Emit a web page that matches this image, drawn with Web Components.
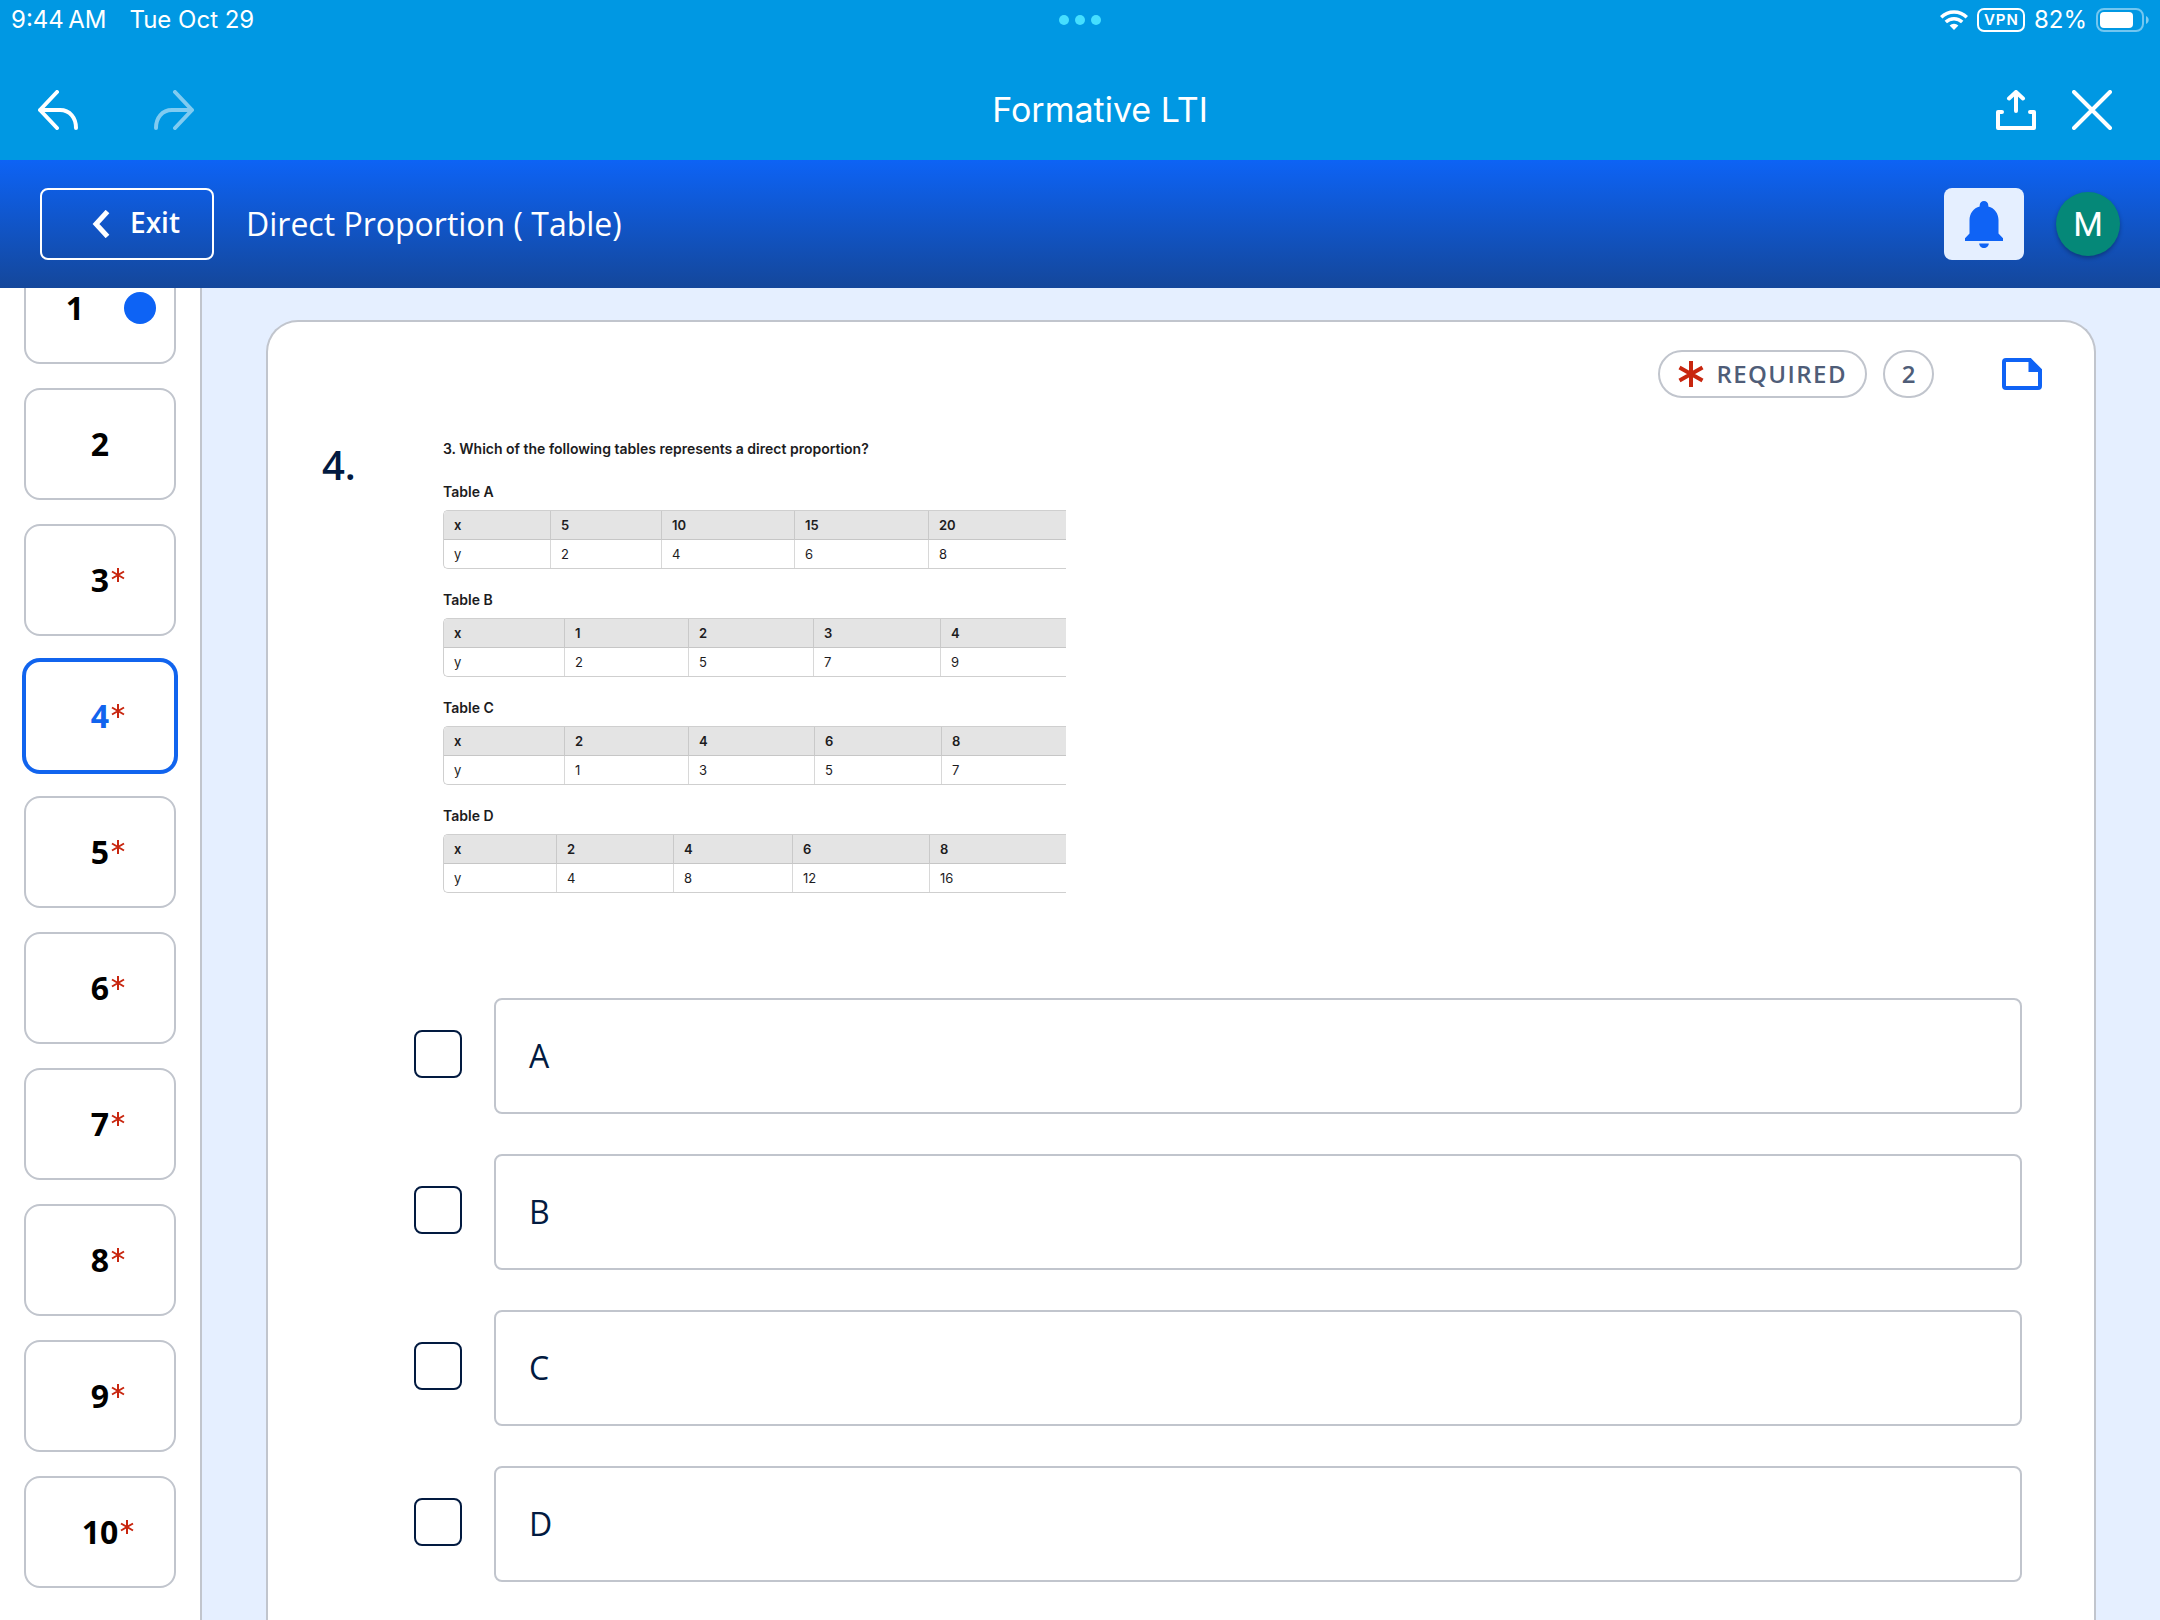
<!DOCTYPE html>
<html lang="en">
<head>
<meta charset="utf-8">
<title>Direct Proportion ( Table)</title>
<style>
  html, body { margin: 0; height: 100%; }
  body { font-family: "Open Sans", "Noto Sans", sans-serif; color: #021a40; background: #fff; overflow: hidden; }
</style>
</head>
<body>
<lti-app></lti-app>
<script>
const define = (name, html, setup) => {
  const tpl = document.createElement('template');
  tpl.innerHTML = html;
  customElements.define(name, class extends HTMLElement {
    connectedCallback() {
      if (this.shadowRoot) return;
      const root = this.attachShadow({ mode: 'open' });
      root.append(tpl.content.cloneNode(true));
      if (setup) setup(this, root);
    }
  });
};

define('device-status', `
<style>
  :host { display: grid; grid-template-columns: 1fr auto 1fr; align-items: center; height: 40px; padding: 0 11px; color: #fff; font: 24px/40px Inter, sans-serif; }
  .left { display: flex; gap: 23px; }
  .dots { display: flex; gap: 6px; }
  .dots i { width: 10px; height: 10px; border-radius: 50%; background: #45dfff; }
  .right { display: flex; justify-content: flex-end; align-items: center; gap: 9px; }
  .vpn { box-sizing: border-box; height: 24px; padding: 0 4px 0 5px; border: 2px solid #fff; border-radius: 7px; font: 600 15px/20px Inter, sans-serif; letter-spacing: 1px; }
  svg { display: block; }
</style>
<div class="left"><span>9:44&#8201;AM</span><span>Tue Oct 29</span></div>
<div class="dots"><i></i><i></i><i></i></div>
<div class="right">
  <svg width="28" height="20" viewBox="0 0 28 20" fill="none" stroke="#fff" stroke-width="3.4">
    <path d="M1.2 7.2a18.3 18.3 0 0 1 25.6 0"/><path d="M5.8 12a11.8 11.8 0 0 1 16.4 0"/>
    <path d="M14 20l-4.4-4.4a6.2 6.2 0 0 1 8.8 0z" fill="#fff" stroke="none"/>
  </svg>
  <span class="vpn">VPN</span>
  <span>82%</span>
  <svg width="53" height="24" viewBox="0 0 53 24">
    <rect x="1" y="1" width="46" height="22" rx="7" fill="none" stroke="#fff" stroke-opacity=".45" stroke-width="2"/>
    <rect x="4" y="4" width="33" height="16" rx="4" fill="#fff"/>
    <path d="M50 8c3.600 1.400 3.600 6.600 0 8z" fill="#fff" fill-opacity=".5"/>
  </svg>
</div>`);

define('icon-button', `
<style>
  :host { display: block; }
  button { display: block; padding: 0; border: 0; background: none; color: inherit; font: inherit; }
</style>
<button type="button"><slot></slot></button>`, (el, root) => {
  root.querySelector('button').setAttribute('aria-label', el.getAttribute('label'));
});

define('viewer-bar', `
<style>
  :host { display: flex; align-items: center; height: 120px; box-sizing: border-box; padding: 20px 48px 0 38px; color: #fff; }
  h1 { flex: 1; margin: 0; text-align: center; font: 400 34px/40px Inter, sans-serif; }
  .group { display: flex; }
  .hist { gap: 76px; padding-right: 10px; }
  .acts { gap: 36px; }
  .off { opacity: .5; }
  svg { display: block; fill: none; stroke: currentColor; stroke-width: 4; stroke-linecap: round; stroke-linejoin: round; }
</style>
<div class="group hist">
  <icon-button label="Undo"><svg width="40" height="40"><path d="M19 2L2 20l17 18M2 20h20c10 0 16 8 16 18"/></svg></icon-button>
  <icon-button label="Redo" class="off"><svg width="40" height="40"><path d="M21 2l17 18-17 18M38 20H18C8 20 2 28 2 38"/></svg></icon-button>
</div>
<h1>Formative LTI</h1>
<div class="group acts">
  <icon-button label="Share"><svg width="40" height="40"><path d="M20 21V2M13 8.500l7-6.500 7 6.500M6 22H2v16h36V22h-4"/></svg></icon-button>
  <icon-button label="Close"><svg width="40" height="40"><path d="M2 2l36 36M38 2L2 38"/></svg></icon-button>
</div>`);

define('activity-bar', `
<style>
  :host { display: flex; align-items: center; height: 128px; box-sizing: border-box; padding: 0 40px; color: #fff; background: linear-gradient(#0d63f5, #14479b); }
  .exit { display: flex; align-items: center; justify-content: flex-end; gap: 20px; box-sizing: border-box; width: 174px; height: 72px; padding: 0 32px 4px 0; border: 2px solid #fff; border-radius: 8px; background: none; color: inherit; font: 600 28px/40px "Open Sans", sans-serif; }
  h2 { flex: 1; margin: 0 0 0 32px; font: 400 32px/44px "Open Sans", sans-serif; }
  .bell { display: grid; place-items: center; width: 80px; height: 72px; padding: 2px 0 0; border: 0; border-radius: 8px; background: #e5efff; }
  .avatar { width: 64px; height: 64px; margin-left: 32px; padding: 0; border: 0; border-radius: 50%; background: #058878; color: #fff; font: 400 34px/64px Roboto, sans-serif; box-shadow: 0 2px 4px rgba(0,0,0,.3); }
  svg { display: block; }
  .chev { margin-top: 4px; }
</style>
<button type="button" class="exit"><svg class="chev" width="18" height="28" viewBox="0 0 18 28"><path d="M15.500 1.500L4 14l11.500 12.500" fill="none" stroke="#fff" stroke-width="5"/></svg>Exit</button>
<h2>Direct Proportion ( Table)</h2>
<button type="button" class="bell" aria-label="Notifications">
  <svg width="40" height="48" viewBox="0 0 40 48" fill="#0f63f5"><path d="M20 0c-2.400 0-4.300 1.800-4.300 4.200v1.200C9.500 7 5.500 12.400 5.500 19v13.500L1 37.200V40h38v-2.800l-4.500-4.700V19c0-6.600-4-12-10.200-13.600V4.200C24.300 1.800 22.400 0 20 0zM15.200 42.500c0 2.500 2.200 4.500 4.800 4.500s4.800-2 4.800-4.500z"/></svg>
</button>
<button type="button" class="avatar" aria-label="Account M">M</button>`);

define('question-link', `
<style>
  :host { display: block; }
  button { display: grid; grid-template-columns: 1fr auto 1fr; align-items: center; width: 100%; height: 112px; box-sizing: border-box; padding: 0; border: 2px solid #c1c5cd; border-radius: 16px; background: #fff; color: #000; font: 700 32px/32px "Open Sans", sans-serif; }
  .num { grid-column: 2; }
  .star { display: none; width: 14px; height: 14px; margin: 0 0 10px 2px; }
  .dot { display: none; width: 32px; height: 32px; border-radius: 50%; background: #0d63f5; }
  :host([required]) .star { display: block; }
  :host([current]) button { border-color: #1164ee; color: #1164ee; box-shadow: 0 0 0 2px #1164ee; }
  :host([answered]) button { display: flex; justify-content: flex-end; gap: 40px; padding-right: 18px; }
  :host([answered]) .dot { display: block; }
</style>
<button type="button"><span class="num"><slot></slot></span><svg class="star" viewBox="0 0 14 14" stroke="#c8260f" stroke-width="2"><path d="M7 0v14M1 3.500l12 7M13 3.500l-12 7"/></svg><i class="dot"></i></button>`);

define('question-nav', `
<style>
  :host { display: block; box-sizing: border-box; width: 202px; padding: 0 24px; border-right: 2px solid #c1c5cd; background: #fff; overflow: hidden; }
  /* list is scrolled partway past its first entry */
  nav { display: grid; gap: 24px; margin-top: -36px; }
</style>
<nav aria-label="Questions">
  <question-link answered>1</question-link>
  <question-link>2</question-link>
  <question-link required>3</question-link>
  <question-link required current>4</question-link>
  <question-link required>5</question-link>
  <question-link required>6</question-link>
  <question-link required>7</question-link>
  <question-link required>8</question-link>
  <question-link required>9</question-link>
  <question-link required>10</question-link>
</nav>`);

define('data-table', `
<style>
  :host { display: block; color: #1c1c1e; }
  h4 { margin: 0 0 8px; font: 600 14px/20px Inter, sans-serif; }
  .clip { border: 1px solid #cfcfcf; border-right: 0; border-radius: 5px 0 0 5px; overflow: hidden; }
  table { width: 100%; table-layout: fixed; border-collapse: separate; border-spacing: 0; }
  th, td { box-sizing: border-box; height: 28px; padding: 0 0 0 10px; border-left: 1px solid #d8d8d8; text-align: left; font: 400 13px/20px Inter, sans-serif; }
  th { height: 29px; background: #e4e4e4; border-bottom: 1px solid #c6c6c6; border-left-color: #c9c9c9; font-weight: 600; }
  th:first-child, td:first-child { border-left: 0; }
</style>
<h4></h4>
<div class="clip"><table><colgroup></colgroup><thead><tr class="x"></tr></thead><tbody><tr class="y"></tr></tbody></table></div>`, (el, root) => {
  const list = n => el.getAttribute(n).split(',');
  root.querySelector('h4').textContent = el.getAttribute('name');
  for (const w of list('cols')) {
    const c = document.createElement('col');
    if (w) c.style.width = w + 'px';
    root.querySelector('colgroup').append(c);
  }
  for (const [row, tag] of [['x', 'th'], ['y', 'td']])
    for (const v of [row, ...list(row)]) {
      const c = document.createElement(tag);
      c.textContent = v;
      root.querySelector('tr.' + row).append(c);
    }
});

define('answer-option', `
<style>
  :host { display: block; }
  label { display: flex; align-items: flex-start; gap: 32px; font-size: 32px; line-height: 44px; }
  input { appearance: none; flex: none; width: 48px; height: 48px; margin: 32px 0 0; box-sizing: border-box; border: 2px solid #021a40; border-radius: 8px; background: #fff; }
  span { flex: 1; box-sizing: border-box; height: 116px; padding: 34px 33px; border: 2px solid #c1c5cd; border-radius: 8px; }
</style>
<label><input type="checkbox"><span><slot></slot></span></label>`);

define('question-card', `
<style>
  :host { display: block; box-sizing: border-box; margin: 32px 64px 0; border: 2px solid #c1c5cd; border-bottom: 0; border-radius: 32px 32px 0 0; background: #fff; }
  header { display: flex; justify-content: flex-end; align-items: center; padding: 28px 52px 0 0; }
  .pill { display: flex; align-items: center; justify-content: center; box-sizing: border-box; height: 48px; border: 2px solid #c1c5cd; border-radius: 24px; color: #4f5d78; font-size: 24px; line-height: 44px; font-weight: 600; }
  .req { gap: 12px; padding: 0 18px; letter-spacing: .06em; }
  .pts { width: 51px; margin: 0 68px 0 16px; }
  svg { display: block; }
  .body { display: grid; grid-template-columns: 121px 1fr; margin-left: 54px; }
  .no { margin: 0; padding-top: 39px; font-size: 40px; line-height: 56px; font-weight: 600; }
  .sheet { display: grid; gap: 21px; width: 623px; padding-top: 41px; }
  h3 { margin: 0 0 2px; color: #1c1c1e; font: 600 14px/20px Inter, sans-serif; }
  .opts { display: grid; gap: 40px; margin: 105px 72px 0 146px; padding-bottom: 80px; }
</style>
<header>
  <span class="pill req"><svg width="26" height="26" viewBox="0 0 26 26" stroke="#c8260f" stroke-width="4"><path d="M13 0v26M1.500 6.500l23 13M24.500 6.500l-23 13"/></svg>REQUIRED</span>
  <span class="pill pts">2</span>
  <icon-button label="Notes"><svg width="40" height="32" viewBox="0 0 40 32"><path d="M28 2H4a2 2 0 0 0-2 2v24a2 2 0 0 0 2 2h32a2 2 0 0 0 2-2V12z" fill="none" stroke="#0f63f5" stroke-width="4"/><path d="M26.500 1v13H39z" fill="#0f63f5"/></svg></icon-button>
</header>
<div class="body">
  <p class="no">4.</p>
  <div class="sheet">
    <h3>3. Which of the following tables represents a direct proportion?</h3>
    <data-table name="Table A" cols="106,111,133,134," x="5,10,15,20" y="2,4,6,8"></data-table>
    <data-table name="Table B" cols="120,124,125,127," x="1,2,3,4" y="2,5,7,9"></data-table>
    <data-table name="Table C" cols="120,124,126,127," x="2,4,6,8" y="1,3,5,7"></data-table>
    <data-table name="Table D" cols="112,117,119,137," x="2,4,6,8" y="4,8,12,16"></data-table>
  </div>
</div>
<div class="opts">
  <answer-option>A</answer-option>
  <answer-option>B</answer-option>
  <answer-option>C</answer-option>
  <answer-option>D</answer-option>
</div>`);

define('lti-app', `
<style>
  :host { display: flex; flex-direction: column; height: 100vh; }
  .top { background: #0098e3; }
  main { flex: 1; min-height: 0; display: flex; background: #e5efff; overflow: hidden; }
  question-nav { flex: none; }
  question-card { flex: 1; min-height: 1300px; }
</style>
<div class="top"><device-status></device-status><viewer-bar></viewer-bar></div>
<activity-bar></activity-bar>
<main><question-nav></question-nav><question-card></question-card></main>`);
</script>
</body>
</html>
